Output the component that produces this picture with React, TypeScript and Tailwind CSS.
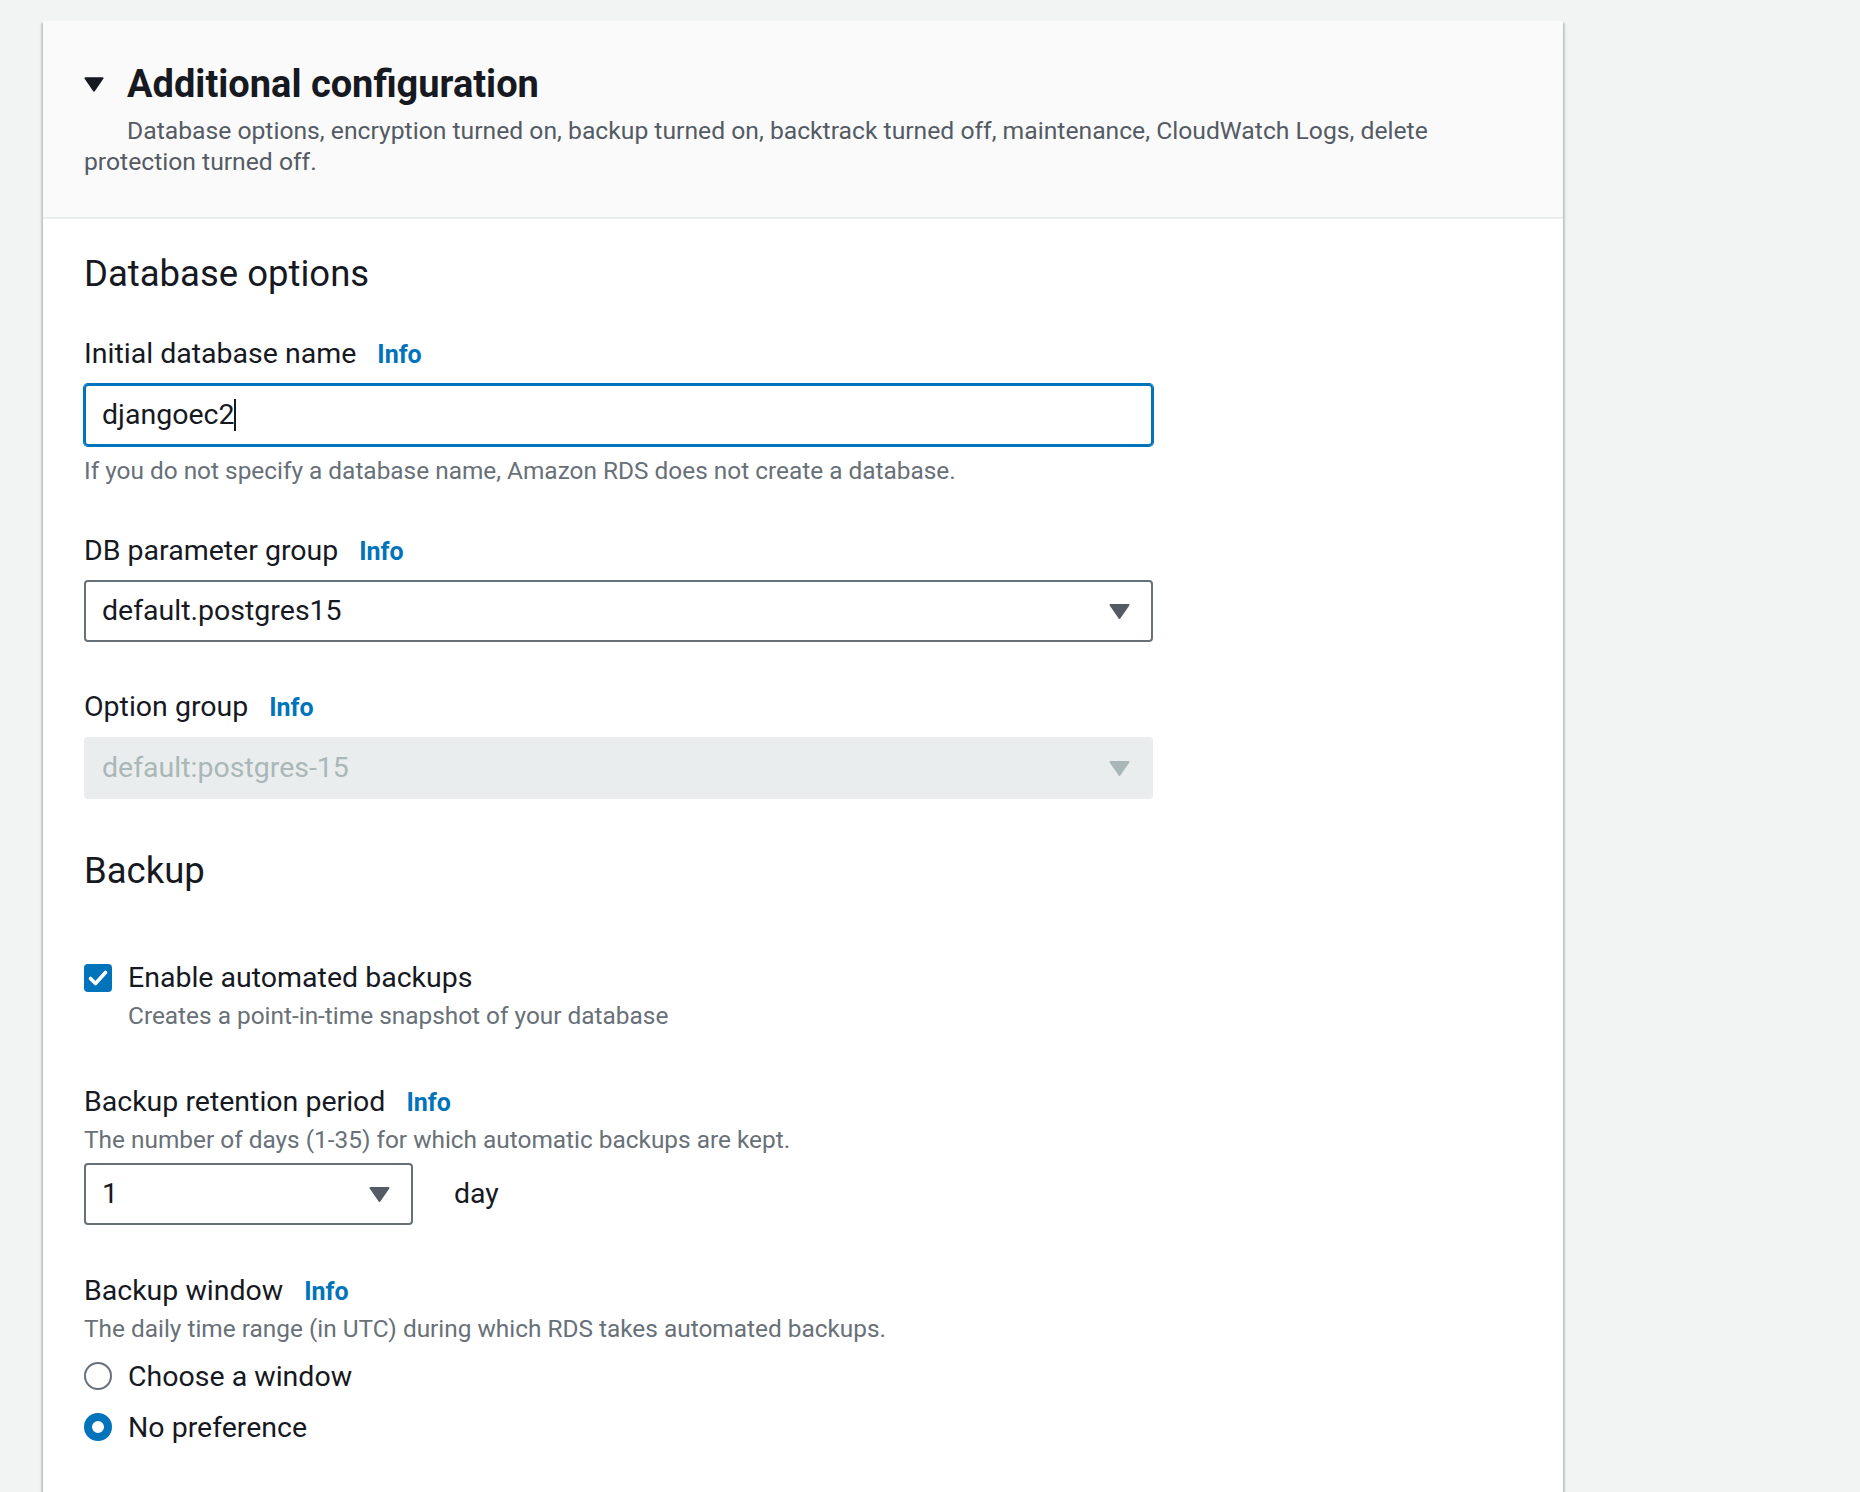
import React from 'react';

const FONT = { fontFamily: 'Roboto, "Liberation Sans", Arial, sans-serif' };

// Kleines Dreieck für Selects und Expander
const Caret: React.FC<{ color?: string; w?: number; h?: number }> = ({ color = '#545b64', w = 21, h = 15 }) => (
  <svg width={w} height={h} viewBox="0 0 21 15" className="shrink-0">
    <path d="M1.5 1 L19.5 1 L10.5 14 Z" fill={color} stroke={color} strokeWidth="2" strokeLinejoin="round" />
  </svg>
);

const Label: React.FC<{ children: React.ReactNode; className?: string }> = ({ children, className = '' }) => (
  <div className={`text-[28.5px] leading-[36px] text-[#16191f] ${className}`}>
    {children}
    <span className="ml-[21px] text-[25px] font-bold text-[#0073bb]">Info</span>
  </div>
);

const Hint: React.FC<{ children: React.ReactNode; className?: string }> = ({ children, className = '' }) => (
  <div className={`text-[24.4px] leading-[32px] text-[#687078] ${className}`}>{children}</div>
);

const Select: React.FC<{ value: string; disabled?: boolean; className?: string }> = ({ value, disabled = false, className = '' }) => (
  <div
    className={`flex items-center justify-between h-[62px] rounded-[4px] border-2 pl-[16px] pr-[21px] ${
      disabled ? 'bg-[#eaeded] border-[#eaeded] text-[#aab7b8]' : 'bg-white border-[#687078] text-[#16191f]'
    } ${className}`}
  >
    <span className="text-[28.5px] leading-[36px]">{value}</span>
    <Caret color={disabled ? '#aab7b8' : '#545b64'} />
  </div>
);

const Radio: React.FC<{ checked?: boolean; label: string; className?: string }> = ({ checked = false, label, className = '' }) => (
  <div className={`flex items-start ${className}`}>
    <div
      className={`mt-[3px] w-[28px] h-[28px] rounded-full shrink-0 bg-white ${
        checked ? 'border-[8px] border-[#0073bb]' : 'border-2 border-[#687078]'
      }`}
    />
    <span className="ml-[16px] text-[28.5px] leading-[36px] text-[#16191f]">{label}</span>
  </div>
);

export default function App() {
  return (
    <div className="min-h-screen bg-[#f2f3f3] pt-[21px] pl-[43px]" style={FONT}>
      <div className="w-[1520px] bg-white shadow-[0_2px_2px_0_rgba(0,28,36,0.3),2px_2px_2px_0_rgba(0,28,36,0.15),-2px_2px_2px_0_rgba(0,28,36,0.15)]">
        {/* Kopfbereich */}
        <div className="bg-[#fafafa] border-b-2 border-[#eaeded] px-[41px] pt-[41px] pb-[40px]">
          <div className="flex items-center h-[44px]">
            <Caret color="#16191f" w={20} h={15} />
            <h2 className="ml-[23px] text-[38px] leading-[44px] font-bold text-[#16191f]">Additional configuration</h2>
          </div>
          <p className="mt-[9px] indent-[43px] text-[24.7px] leading-[31px] text-[#545b64] pr-[60px]">
            Database options, encryption turned on, backup turned on, backtrack turned off, maintenance, CloudWatch Logs, delete
            protection turned off.
          </p>
        </div>

        {/* Inhalt */}
        <div className="px-[41px] pt-[33px] pb-[60px]">
          <h3 className="text-[36.5px] leading-[44px] text-[#16191f]">Database options</h3>

          <Label className="mt-[40px]">Initial database name</Label>
          <div className="mt-[11px] w-[1069px] h-[62px] rounded-[4px] border-2 border-[#0073bb] shadow-[0_0_0_1px_#0073bb] flex items-center pl-[16px]">
            <span className="text-[28.5px] leading-[36px] text-[#16191f]">djangoec2</span>
            <span className="inline-block w-[2px] h-[32px] bg-[#16191f]" />
          </div>
          <Hint className="mt-[9px]">If you do not specify a database name, Amazon RDS does not create a database.</Hint>

          <Label className="mt-[46px]">DB parameter group</Label>
          <Select className="mt-[10px] w-[1069px]" value="default.postgres15" />

          <Label className="mt-[47px]">Option group</Label>
          <Select className="mt-[11px] w-[1069px]" value="default:postgres-15" disabled />

          <h3 className="mt-[50px] text-[36.5px] leading-[44px] text-[#16191f]">Backup</h3>

          <div className="mt-[67px] flex items-start">
            <svg width="28" height="28" viewBox="0 0 28 28" className="mt-[4px] shrink-0">
              <rect x="0" y="0" width="28" height="28" rx="4" fill="#0073bb" />
              <path d="M6.5 14.5 L11.5 19.5 L21.5 8.5" fill="none" stroke="#fff" strokeWidth="3.6" strokeLinecap="round" strokeLinejoin="round" />
            </svg>
            <span className="ml-[16px] text-[28.5px] leading-[36px] text-[#16191f]">Enable automated backups</span>
          </div>
          <Hint className="mt-[4px] pl-[44px]">Creates a point-in-time snapshot of your database</Hint>

          <Label className="mt-[52px]">Backup retention period</Label>
          <Hint className="mt-[3px]">The number of days (1-35) for which automatic backups are kept.</Hint>
          <div className="mt-[7px] flex items-center">
            <Select className="w-[329px]" value="1" />
            <span className="ml-[41px] text-[28.5px] leading-[36px] text-[#16191f]">day</span>
          </div>

          <Label className="mt-[48px]">Backup window</Label>
          <Hint className="mt-[3px]">The daily time range (in UTC) during which RDS takes automated backups.</Hint>
          <Radio className="mt-[14px]" label="Choose a window" />
          <Radio className="mt-[15px]" label="No preference" checked />
        </div>
      </div>
    </div>
  );
}
